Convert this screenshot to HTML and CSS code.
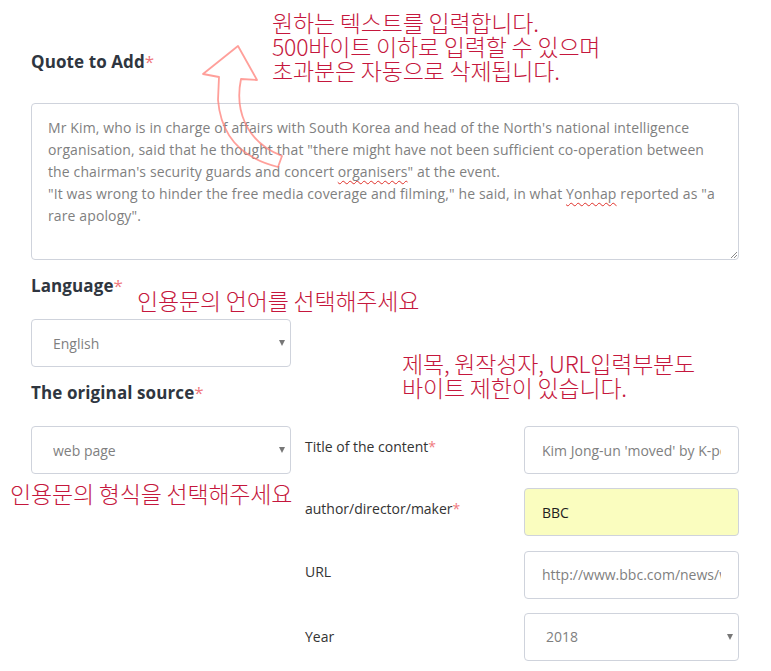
FILE: index.html
```html
<!DOCTYPE html>
<html lang="en">
<head>
<meta charset="utf-8">
<title>Quote to Add</title>
<link rel="stylesheet" href="styles.css">
</head>
<body>
<main class="page">
  <form class="form">
    <div class="field-label label-quote">Quote to Add<span class="req">*</span></div>
    <div class="textbox" role="textbox" aria-multiline="true">
      <span class="line">Mr Kim, who is in charge of affairs with South Korea and head of the North's national intelligence</span>
      <span class="line">organisation, said that he thought that "there might have not been sufficient co-operation between</span>
      <span class="line">the chairman's security guards and concert <span class="spell">organisers</span>" at the event.</span>
      <span class="line">"It was wrong to hinder the free media coverage and filming," he said, in what <span class="spell">Yonhap</span> reported as "a</span>
      <span class="line">rare apology".</span>
      <svg class="resize" width="7" height="7" viewBox="0 0 7 7" aria-hidden="true">
        <path d="M1 7 L7 1 M4 7 L7 4" stroke="#8a8a8a" stroke-width="1"/>
      </svg>
    </div>

    <div class="field-label">Language<span class="req">*</span></div>
    <div class="select-wrap select-left">
      <select class="select">
        <option>English</option>
      </select>
    </div>

    <div class="field-label">The original source<span class="req">*</span></div>
    <div class="source-grid">
      <div class="select-wrap">
        <select class="select">
          <option>web page</option>
        </select>
      </div>
      <div class="side-label row1">Title of the content<span class="req">*</span></div>
      <input class="input row1" type="text" value="Kim Jong-un 'moved' by K-pop performance">
      <div class="side-label row2">author/director/maker<span class="req">*</span></div>
      <input class="input input-filled row2" type="text" value="BBC">
      <div class="side-label row3">URL</div>
      <input class="input row3" type="text" value="http://www.bbc.com/news/world-asia-43645308">
      <div class="side-label row4 year-label">Year</div>
      <div class="select-wrap row4 col3">
        <select class="select">
          <option>2018</option>
        </select>
      </div>
    </div>
  </form>

  <svg class="arrow" width="771" height="671" viewBox="0 0 771 671" aria-hidden="true">
    <path d="M238,46 L257,80 L241,79 C235,108 244,141 282,156 L278,167 C241,158 221,136 218,100 L219,77 L203,74 Z"
          fill="none" stroke="#ff7f78" stroke-width="1.8" stroke-opacity="0.75" stroke-linejoin="round"/>
  </svg>

  <div class="note note-quote">
    <span class="note-line">원하는 텍스트를 입력합니다.</span>
    <span class="note-line">500바이트 이하로 입력할 수 있으며</span>
    <span class="note-line">초과분은 자동으로 삭제됩니다.</span>
  </div>
  <div class="note note-lang"><span class="note-line">인용문의 언어를 선택해주세요</span></div>
  <div class="note note-limit">
    <span class="note-line">제목, 원작성자, URL입력부분도</span>
    <span class="note-line">바이트 제한이 있습니다.</span>
  </div>
  <div class="note note-source"><span class="note-line">인용문의 형식을 선택해주세요</span></div>
</main>
</body>
</html>
```

FILE: styles.css
```css
* {
  box-sizing: border-box;
}

html, body {
  margin: 0;
  padding: 0;
  background: #ffffff;
}

body {
  font-family: "Open Sans", "Liberation Sans", sans-serif;
  color: #333333;
}

.page {
  position: relative;
  width: 771px;
  height: 671px;
  overflow: hidden;
}

.form {
  width: 708px;
  margin-left: 31px;
  padding-top: 50px;
}

.field-label {
  font-size: 17px;
  font-weight: 700;
  line-height: 24px;
  letter-spacing: 0.1px;
  color: #2f3640;
  margin-top: 14px;
  margin-bottom: 21px;
}

.label-quote {
  margin-top: 0;
  margin-bottom: 29px;
}

.req {
  color: #f07a80;
  font-weight: 400;
}

.textbox {
  position: relative;
  height: 157px;
  border: 1px solid #cfd3dc;
  border-radius: 4px;
  padding: 13px 16px;
  font-size: 14px;
  line-height: 22px;
  letter-spacing: 0.12px;
  color: #7f7f7f;
}

.line {
  display: block;
  white-space: nowrap;
}

.line .spell {
  display: inline;
  text-decoration: underline wavy #e0302a;
  text-decoration-thickness: 1px;
  text-underline-offset: 3px;
}

.resize {
  position: absolute;
  right: 1px;
  bottom: 1px;
}

.select-wrap {
  position: relative;
  height: 48px;
}

.select-left {
  width: 260px;
}

.select-wrap::after {
  content: "";
  position: absolute;
  right: 6px;
  top: 21px;
  border-left: 3px solid transparent;
  border-right: 3px solid transparent;
  border-top: 6px solid #777777;
  pointer-events: none;
}

.select {
  appearance: none;
  -webkit-appearance: none;
  width: 100%;
  height: 48px;
  border: 1px solid #cfd3dc;
  border-radius: 4px;
  background: #ffffff;
  padding: 0 20px 0 21px;
  font-family: "Open Sans", "Liberation Sans", sans-serif;
  font-size: 14px;
  color: #7f7f7f;
}

.source-grid {
  display: grid;
  grid-template-columns: 260px 1fr 215px;
  grid-auto-rows: 48px;
  column-gap: 14px;
  row-gap: 14.33px;
}

.side-label {
  grid-column: 2;
  font-size: 14px;
  line-height: 20px;
  padding-top: 11px;
  color: #333333;
}

.year-label {
  padding-top: 14px;
}

.row1 { grid-row: 1; }
.row2 { grid-row: 2; }
.row3 { grid-row: 3; }
.row4 { grid-row: 4; }

.input,
.col3 {
  grid-column: 3;
}

.input {
  width: 100%;
  height: 48px;
  border: 1px solid #cfd3dc;
  border-radius: 4px;
  background: #ffffff;
  padding: 0 17px;
  font-family: "Open Sans", "Liberation Sans", sans-serif;
  font-size: 14px;
  color: #7f7f7f;
}

.input-filled {
  background: #fafdbf;
  color: #1e1e1e;
}

.arrow {
  position: absolute;
  left: 0;
  top: 0;
  pointer-events: none;
}

.note {
  position: absolute;
  font-family: "Noto Sans CJK KR", "Noto Sans", sans-serif;
  font-weight: 300;
  font-size: 23px;
  letter-spacing: -0.2px;
  color: #c5173d;
  white-space: nowrap;
}

.note-line {
  display: block;
  height: 24px;
  line-height: 24px;
}

.note-quote {
  left: 272px;
  top: 10px;
}

.note-lang {
  left: 137px;
  top: 288px;
}

.note-limit {
  left: 402px;
  top: 351px;
}

.note-source {
  left: 10px;
  top: 481px;
}
```
